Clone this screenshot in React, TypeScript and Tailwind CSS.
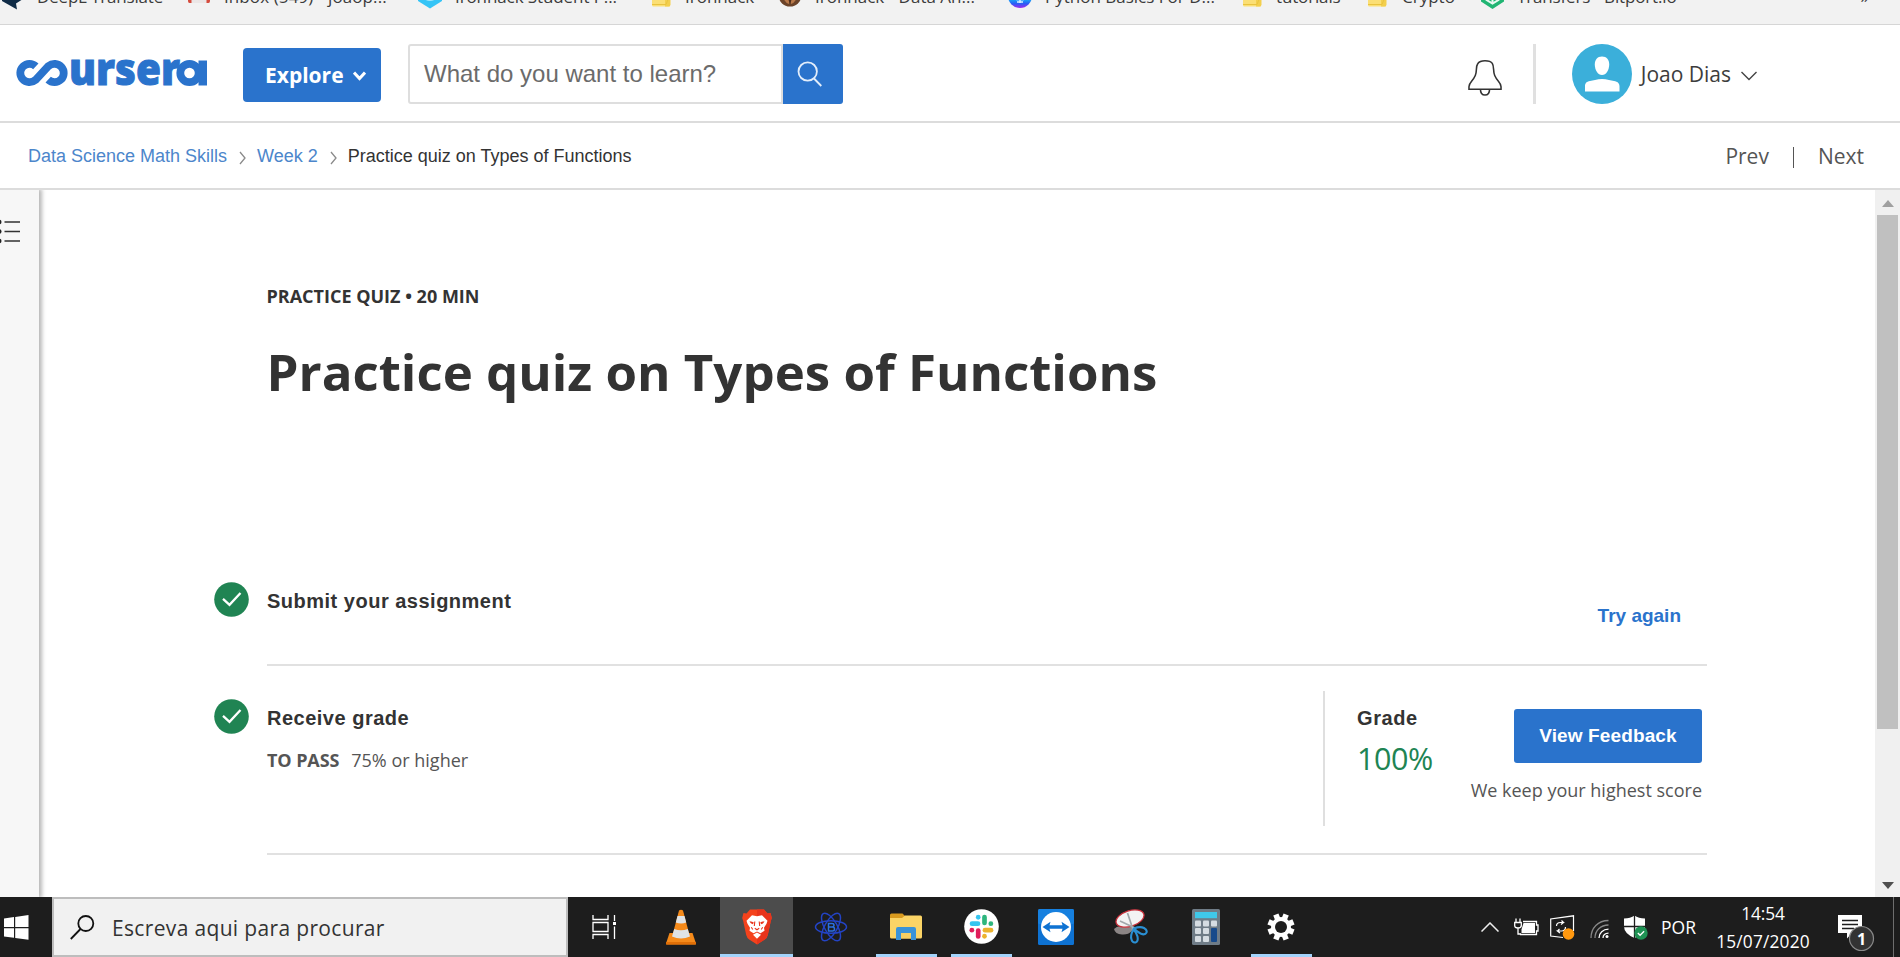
import type { ReactNode } from "react";

const OPEN = "font-['Open_Sans',sans-serif]";
const ARIAL = "font-['Liberation_Sans',Arial,sans-serif]";

function FolderMark() {
  return (
    <svg width="19" height="24" viewBox="0 0 19 24">
      <path d="M0 2h18v20.500H1.500Q0 22.500 0 21z" fill="#fbdf75" />
      <path d="M13 15h5.500v5.500q0 2-2 2H13z" fill="#f3cf4d" />
      <path d="M0 20.500h14l2-5" fill="none" stroke="#e9c33f" strokeWidth="1" />
    </svg>
  );
}

const bookmarks: { icon: ReactNode; label: string; slot: string; mark: string; tracking?: string }[] = [
  {
    label: "DeepL Translate",
    slot: "w-[188px]",
    mark: "w-[37px]",
    tracking: "tracking-[-0.18px]",
    icon: (
      <svg width="23" height="26" viewBox="0 0 23 26">
        <path d="M2 2h21v13l-7 4.500 1 6L2 17z" fill="#0f2b46" />
        <path d="M8 13l5-2" stroke="#dfe8f0" strokeWidth="2" />
      </svg>
    ),
  },
  {
    label: "Inbox (549) - joaop...",
    slot: "w-[230px]",
    mark: "w-[36px]",
    tracking: "tracking-[0.1px]",
    icon: (
      <svg width="22" height="20" viewBox="0 0 22 20">
        <path d="M3 2h16v17H3z" fill="#ebe6e6" />
        <path d="M3 8l8 7 8-7" fill="none" stroke="#d9c3c1" strokeWidth="2" />
        <path d="M0 2h3.500v17H1.500Q0 19 0 17zM18.500 2H22v15q0 2-1.500 2h-2z" fill="#d54b3d" />
      </svg>
    ),
  },
  {
    label: "Ironhack Student P...",
    slot: "w-[234px]",
    mark: "w-[37px]",
    tracking: "tracking-[-0.1px]",
    icon: (
      <svg width="24" height="25" viewBox="0 0 24 25">
        <path d="M0 2h24v15l-12 7.500L0 17z" fill="#35c4f6" />
        <path d="M7 14.500q5 3 10 0" fill="none" stroke="#a4e6fb" strokeWidth="2" />
      </svg>
    ),
  },
  { label: "Ironhack", slot: "w-[126px]", mark: "w-[33px]", icon: <FolderMark /> },
  {
    label: "Ironhack - Data An...",
    slot: "w-[230px]",
    mark: "w-[37px]",
    icon: (
      <svg width="24" height="24" viewBox="0 0 24 24">
        <circle cx="12" cy="11" r="11.500" fill="#6b4329" />
        <path d="M4 8q1 10 7 12V8zM20 8q-1 10-7 12V8z" fill="#b9794a" />
        <path d="M9 9q1 7 3 10 2-3 3-10" fill="#4a2c1b" />
      </svg>
    ),
  },
  {
    label: "Python Basics For D...",
    slot: "w-[235px]",
    mark: "w-[37px]",
    icon: (
      <svg width="24" height="25" viewBox="0 0 24 25">
        <defs>
          <linearGradient id="round" x1="0" x2="0" y1="0" y2="1">
            <stop offset="0.6" stopColor="#12b9fa" />
            <stop offset="0.82" stopColor="#2a5cf5" />
            <stop offset="1" stopColor="#a02af0" />
          </linearGradient>
        </defs>
        <circle cx="12" cy="12" r="12" fill="url(#round)" />
        <path d="M8 15.500h8M9 18h6M12 15v4" stroke="#d8f0ff" strokeWidth="1.500" />
      </svg>
    ),
  },
  { label: "tutorials", slot: "w-[125px]", mark: "w-[33px]", tracking: "tracking-[-0.15px]", icon: <FolderMark /> },
  { label: "Crypto", slot: "w-[113px]", mark: "w-[34px]", icon: <FolderMark /> },
  {
    label: "Transfers - Bitport.io",
    slot: "w-[240px]",
    mark: "w-[36px]",
    tracking: "tracking-[-0.15px]",
    icon: (
      <svg width="23" height="25" viewBox="0 0 23 25">
        <path d="M0 2h23v15.500L11.500 25 0 17.500z" fill="#21b573" />
        <path d="M5.500 13v3l6 3.500 6-3.500v-3M11.500 10v9" fill="none" stroke="#e8faf1" strokeWidth="2" />
      </svg>
    ),
  },
];

function BookmarksBar() {
  return (
    <div className={`flex h-[25px] shrink-0 overflow-hidden border-b border-[#d6d6d6] bg-[#f2f2f2] text-[17px] text-[#3c3c3c] ${OPEN}`}>
      <div className="-mt-[15px] flex h-6 grow items-start leading-6">
        {bookmarks.map((b) => (
          <div key={b.label} className={`flex shrink-0 whitespace-nowrap ${b.slot}`}>
            <span className={`-mt-px shrink-0 ${b.mark}`}>{b.icon}</span>
            <span className={b.tracking}>{b.label}</span>
          </div>
        ))}
        <span className="ml-auto pr-[31px]">»</span>
      </div>
    </div>
  );
}

function Logo() {
  return (
    <svg className="ml-4 -mt-0.5 shrink-0" width="192" height="32" viewBox="0 0 192 32">
      <g fill="none" stroke="#2a73cc" strokeWidth="7.800">
        <path d="M19.800 9.300A9.200 9.200 0 1 0 19.400 23.050L32.600 8.950A9.200 9.200 0 1 1 32.200 22.700" />
        <circle cx="173.500" cy="16" r="9.200" />
      </g>
      <path d="M182.500 3.500h8.500v25h-8.500z" fill="#2a73cc" />
      <text
        x="53"
        y="28.200"
        textLength="111"
        lengthAdjust="spacingAndGlyphs"
        fill="#2a73cc"
        stroke="#2a73cc"
        strokeWidth="1"
        fontSize="43.500"
        fontWeight="800"
        className={OPEN}
      >
        urser
      </text>
    </svg>
  );
}

function Header() {
  return (
    <header className="flex h-[98px] shrink-0 items-center border-b-2 border-[#dcdcdc] bg-white pt-[2px]">
      <Logo />
      <button className={`ml-[35px] mt-0.5 flex h-[54px] w-[138px] items-center rounded bg-[#2a73cc] pl-[22px] text-[21px] font-bold text-white ${OPEN}`}>
        <span className="mt-px">Explore</span>
        <svg className="ml-[9px] mt-0.5" width="13" height="10" viewBox="0 0 13 10" fill="none" stroke="#fff" strokeWidth="3">
          <path d="M1 1.500l5.500 6 5.500-6" />
        </svg>
      </button>
      <div className="ml-[27px] flex h-[60px] w-[435px]">
        <div className={`flex w-[375px] items-center rounded-l-[3px] border-2 border-[#dedede] pl-[14px] text-2xl text-[#6b6b6b] ${ARIAL}`}>
          What do you want to learn?
        </div>
        <button className="flex w-[60px] items-center rounded-r-[3px] bg-[#2a73cc] pl-[14px]">
          <svg width="26" height="26" viewBox="0 0 26 26" fill="none" stroke="#e3eefb" strokeWidth="1.800">
            <circle cx="10.700" cy="10.500" r="9.200" />
            <path d="M17 17.500l7.300 7.500" />
          </svg>
        </button>
      </div>
      <svg className="ml-auto mt-[8px]" width="34" height="36" viewBox="0.500 1 35 37" fill="none" stroke="#333" strokeWidth="1.600">
        <path d="M1.500 31h33v-2.500c0-4.500-4-5.500-6.500-11.500-2-5-.3-9-2.500-12.500C24 2.200 21 1.800 18 1.800s-6 .7-7.500 3C8.300 8 10 12 8 17c-2.500 6-6.500 7-6.500 11.500z" />
        <path d="M13.300 31c0 4 1.700 6 4.700 6s4.700-2 4.700-6" />
      </svg>
      <div className="ml-[31px] h-[60px] w-[3px] bg-[#e0e0e0]" />
      <svg className="ml-[36px]" width="60" height="60" viewBox="0 0 60 60">
        <circle cx="30" cy="30" r="30" fill="#3bafda" />
        <path d="M30 12.500c4.800 0 7.200 3.500 7.200 8 0 5.500-3 10.500-7.200 10.500s-7.200-5-7.200-10.500c0-4.500 2.400-8 7.200-8z" fill="#fff" />
        <path d="M13 47.500v-5c0-3.500 1.500-4.800 5-5.500l5-1c4.500-1.300 9.500-1.300 14 0l5 1c3.500.7 5.500 2 5.500 5.500v5z" fill="#fff" />
      </svg>
      <span className={`ml-[9px] mt-0.5 text-[21px] text-[#3d3d3d] ${OPEN}`}>Joao Dias</span>
      <svg className="ml-[10px] mr-[143px] mt-[3px]" width="16" height="10" viewBox="0 0 16 10" fill="none" stroke="#444" strokeWidth="1.400">
        <path d="M.5 1l7.500 7.500L15.500 1" />
      </svg>
    </header>
  );
}

function Crumb() {
  return (
    <svg className="mt-1" width="7" height="14" viewBox="0 0 7 14" fill="none" stroke="#8a8a8a" strokeWidth="1.300">
      <path d="M1 1l5 6-5 6" />
    </svg>
  );
}

function Breadcrumbs() {
  return (
    <nav className={`flex h-[67px] shrink-0 items-center border-b-2 border-[#dcdcdc] bg-white pl-[28px] pr-[36px] text-lg ${ARIAL}`}>
      <span className="text-[#4c86cb]">Data Science Math Skills</span>
      <span className="ml-3 mr-[11px]"><Crumb /></span>
      <span className="text-[#4c86cb]">Week 2</span>
      <span className="ml-3 mr-[11px]"><Crumb /></span>
      <span className="text-[#333]">Practice quiz on Types of Functions</span>
      <div className={`ml-auto flex items-center pt-0.5 text-[21px] text-[#555] ${OPEN}`}>
        <span>Prev</span>
        <span className="ml-[24px] mr-[24px] mt-0.5 h-[21px] w-px bg-[#555]" />
        <span>Next</span>
      </div>
    </nav>
  );
}

function Check() {
  return (
    <svg className="ml-[0.5px] mt-[17px]" width="35" height="35" viewBox="0 0 35 35">
      <circle cx="17.500" cy="17.500" r="17.300" fill="#208453" />
      <path d="M9 16.800l6.500 6L26.500 11" fill="none" stroke="#fff" strokeWidth="2.300" />
    </svg>
  );
}

function Content() {
  return (
    <main className="flex h-full grow flex-col pl-[174px]">
      <p className={`ml-[53.5px] mt-[94px] h-6 text-lg leading-6 font-bold text-[#333] ${OPEN}`}>PRACTICE QUIZ • 20 MIN</p>
      <h1 className={`ml-[53.5px] mt-[31px] h-16 text-[51px] leading-[64px] font-bold text-[#333] ${OPEN}`}>Practice quiz on Types of Functions</h1>

      <section className="mt-[162px] flex h-[101px]">
        <div className="w-[54px] shrink-0"><Check /></div>
        <div className={`flex w-[1440px] justify-between border-b-2 border-[#e1e1e1] pr-[26px] ${ARIAL}`}>
          <h2 className="mt-[24px] h-6 text-xl leading-6 font-bold tracking-[0.5px] text-[#333]">Submit your assignment</h2>
          <button className="mt-[39px] h-6 text-[19px] leading-6 font-bold text-[#2a73cc]">Try again</button>
        </div>
      </section>

      <section className="flex h-[189px]">
        <div className="w-[54px] shrink-0 pt-[16px]"><Check /></div>
        <div className="flex w-[1440px] border-b-2 border-[#e1e1e1]">
          <div>
            <h2 className={`mt-[40px] h-6 text-xl leading-6 font-bold tracking-[0.5px] text-[#333] ${ARIAL}`}>Receive grade</h2>
            <p className={`mt-[18px] flex h-6 gap-3 text-lg leading-6 text-[#555] ${OPEN}`}>
              <b className="tracking-[-0.1px]">TO PASS</b>
              <span>75% or higher</span>
            </p>
          </div>
          <div className="ml-auto mt-[25px] flex h-[135px] w-[384px] border-l-2 border-[#dfdfdf] pl-[32px]">
            <div>
              <h2 className={`mt-[15px] h-6 text-xl leading-6 font-bold tracking-[0.6px] text-[#333] ${ARIAL}`}>Grade</h2>
              <p className={`mt-[8px] h-10 text-[30.5px] leading-10 tracking-[-0.4px] text-[#208453] ${OPEN}`}>100%</p>
            </div>
            <div className="ml-auto flex flex-col items-end pr-[5px] pt-[18px]">
              <button className={`h-[54px] w-[188px] rounded-[3px] bg-[#2a73cc] text-[19px] font-bold tracking-[0.12px] text-white ${ARIAL}`}>View Feedback</button>
              <p className={`mt-[15px] h-6 text-[18px] leading-6 text-[#555] ${OPEN}`}>We keep your highest score</p>
            </div>
          </div>
        </div>
      </section>
    </main>
  );
}

function Scrollbar() {
  return (
    <div className="flex w-[25px] shrink-0 flex-col items-center bg-[#f0f0f0]">
      <svg className="mt-[10px]" width="12" height="7" viewBox="0 0 12 7"><path d="M6 0l6 7H0z" fill="#a0a0a0" /></svg>
      <div className="mt-[8px] h-[514px] w-[21px] bg-[#c0c0c0]" />
      <svg className="mb-[8px] mt-auto" width="12" height="7" viewBox="0 0 12 7"><path d="M0 0h12L6 7z" fill="#4f4f4f" /></svg>
    </div>
  );
}

function Vlc() {
  return (
    <svg width="30" height="36" viewBox="0 0 30 36">
      <path d="M3.500 24h23L30 34.500q0 1-1 1H1q-1 0-1-1z" fill="#f58a1a" />
      <path d="M0 33h30v2.500H0z" fill="#e06f07" />
      <path d="M13 1.500q2-1.500 4 0L24 28q-9 4-18 0z" fill="#f58a1a" />
      <path d="M11.500 7h7l1.700 6.500q-5 2-10.400 0zM8.200 20q6.800 2.500 13.600 0L24 27.500q-9 4-18 0z" fill="#dfe3e6" />
    </svg>
  );
}

function Brave() {
  return (
    <svg width="30" height="36" viewBox="0 0 30 36">
      <path d="M8 .5h14l3.500 4 3-.5 1.300 5-1 3-3 14q-.7 3-3 4.600L15 35.500 7.200 30.600Q5 29 4.200 26l-3-14-1-3L1.500 4l3 .5z" fill="#f4421c" />
      <path d="M15 .5h7l3.500 4 3-.5 1.300 5-1 3-3 14q-.7 3-3 4.600L15 35.500z" fill="#e8341c" />
      <path d="M15 7.200l5-1 5.500 5.500-1 3-2.500 4 .5 3-4 2.500L15 22.500l-3.500 1.700-4-2.500.5-3-2.500-4-1-3 5.500-5.500z" fill="#fff" />
      <path d="M11 25.700l4-2.200 4 2.200-4 4z" fill="#fff" />
      <path d="M7.500 12.300q3 .2 4.500 1.500l-1.500 1.500q-2-.4-3-3zM22.500 12.300q-3 .2-4.500 1.500l1.500 1.500q2-.4 3-3z" fill="#e8341c" />
      <path d="M12.800 12.500l-.5 4.500M17.200 12.500l.5 4.500M12.800 19.300l2.200 1.500 2.200-1.500M9.300 18.300l1.500 2.200M20.700 18.300l-1.500 2.200" fill="none" stroke="#e8341c" strokeWidth="1.100" />
    </svg>
  );
}

function Atom() {
  return (
    <svg width="34" height="32" viewBox="0 0 34 32" fill="none" stroke="#2343c4" strokeWidth="1.500">
      <ellipse cx="17" cy="16" rx="15.500" ry="6.300" />
      <ellipse cx="17" cy="16" rx="15.500" ry="6.300" transform="rotate(60 17 16)" />
      <ellipse cx="17" cy="16" rx="15.500" ry="6.300" transform="rotate(120 17 16)" />
      <path d="M14.500 12v8M14 12.500h4q2 0 2 1.700t-2 1.800h-3 3.500q2 0 2 2t-2 2H14" stroke="#2a6fe0" />
    </svg>
  );
}

function Explorer() {
  return (
    <svg width="32" height="28" viewBox="0 0 32 28">
      <path d="M0 2q0-1.500 1.500-1.500h11L15 3v5H0z" fill="#d99a1e" />
      <path d="M0 5h12l3-2.500h15.500Q32 2.500 32 4v20q0 1.500-1.500 1.500h-29Q0 25.500 0 24z" fill="#fbd466" />
      <path d="M6 16q0-2 2-2h16q2 0 2 2v11h-5v-6H11v6H6z" fill="#3a93d8" />
      <path d="M11 20h10v5.500H11z" fill="#f6cf63" />
    </svg>
  );
}

function Slack() {
  return (
    <svg width="35" height="35" viewBox="0 0 35 35">
      <circle cx="17.500" cy="17.500" r="17.300" fill="#fff" />
      <g strokeWidth="4.700" strokeLinecap="round" fill="none">
        <path d="M8 14.700h6" stroke="#36c5f0" /><path d="M14.200 8.200v.1" stroke="#36c5f0" />
        <path d="M20.500 8v6" stroke="#2eb67d" /><path d="M26.800 14.700h.1" stroke="#2eb67d" />
        <path d="M21 21.200h6" stroke="#ecb22e" /><path d="M20.500 27.200v.1" stroke="#ecb22e" />
        <path d="M14.200 21.500v6" stroke="#e01e5a" /><path d="M7.800 21.200h.1" stroke="#e01e5a" />
      </g>
    </svg>
  );
}

function TeamViewer() {
  return (
    <svg width="36" height="36" viewBox="0 0 36 36">
      <rect width="36" height="36" rx="1.500" fill="#0e72d2" />
      <rect width="36" height="15" rx="1.500" fill="#1a86e4" opacity="0.7" />
      <circle cx="18" cy="18" r="15" fill="#fff" />
      <path d="M4.500 18l8-5.300-1 3.500h13l-1-3.500 8 5.300-8 5.300 1-3.500h-13l1 3.500z" fill="#0e72d2" />
    </svg>
  );
}

function Snip() {
  return (
    <svg width="34" height="36" viewBox="0 0 34 36">
      <path d="M0 20q4-4 9-2l9-1v5q-4 4-10 3.500Q1 25 0 20z" fill="#8b8585" />
      <ellipse cx="16" cy="9.500" rx="14.500" ry="7.800" transform="rotate(-18 16 9.500)" fill="#f3f3f3" stroke="#c9303b" strokeWidth="1.300" />
      <path d="M13.500 4l5 15M6 12l15 7" stroke="#a2a7ab" strokeWidth="1.700" />
      <path d="M18 19l3 1" stroke="#b9bec2" strokeWidth="3" />
      <g fill="none" stroke="#2a8fd3" strokeWidth="2.100">
        <path d="M19.500 20.500q-3.500 6-2 10 1 3.500 4 3 3-1 2-6-1-4-4-7z" />
        <path d="M20 19.500q6-2.500 10-.5 3.500 2 2.500 4.500-1.500 3-6 1-4-2-6.500-5z" />
      </g>
    </svg>
  );
}

const calcKeys = [
  [3, 11.5], [11, 11.5], [19, 11.5],
  [3, 19], [11, 19],
  [3, 27], [11, 27],
];

function Calculator() {
  return (
    <svg width="28" height="36" viewBox="0 0 28 36">
      <rect width="28" height="36" rx="1.500" fill="#6f7c87" />
      <rect x="3" y="3" width="22" height="6.200" fill="#3fc8ea" />
      {calcKeys.map(([x, y]) => (
        <rect key={`${x}-${y}`} x={x} y={y} width="6" height="6" rx="1" fill="#d5dce2" />
      ))}
      <rect x="19" y="19" width="6" height="14" rx="1" fill="#174a8b" />
    </svg>
  );
}

function Gear() {
  return (
    <svg width="28" height="28" viewBox="0 0 28 28">
      {[22.5, 67.5, 112.5, 157.5].map((a) => (
        <rect key={a} x="11.200" y="0.500" width="5.600" height="27" fill="#fff" transform={`rotate(${a} 14 14)`} />
      ))}
      <circle cx="14" cy="14" r="10" fill="#fff" />
      <circle cx="14" cy="14" r="6" fill="#1d1d1d" />
    </svg>
  );
}

const apps: { icon: ReactNode; id: string; cell: string; bar: string }[] = [
  { id: "vlc", icon: <Vlc />, cell: "w-[78px]", bar: "w-0" },
  { id: "brave", icon: <Brave />, cell: "w-[73px] bg-[#4c4c4c]", bar: "w-full" },
  { id: "atom", icon: <Atom />, cell: "w-[76px]", bar: "w-0" },
  { id: "files", icon: <Explorer />, cell: "w-[74px]", bar: "w-[61px]" },
  { id: "slack", icon: <Slack />, cell: "w-[76px]", bar: "w-[61px]" },
  { id: "remote", icon: <TeamViewer />, cell: "w-[74px]", bar: "w-0" },
  { id: "snip", icon: <Snip />, cell: "w-[76px]", bar: "w-0" },
  { id: "calc", icon: <Calculator />, cell: "w-[74px]", bar: "w-0" },
  { id: "settings", icon: <Gear />, cell: "w-[76px]", bar: "w-[61px]" },
];

function Tray() {
  return (
    <div className={`ml-auto flex h-[60px] items-center text-white ${OPEN}`}>
      <svg width="18" height="10" viewBox="0 0 18 10" fill="none" stroke="#eee" strokeWidth="1.500"><path d="M.5 9.500L9 1l8.500 8.500" /></svg>
      <svg className="ml-[15px]" width="25" height="18" viewBox="0 0 25 18" fill="none" stroke="#fff" strokeWidth="1.300">
        <path d="M2 .5v4M6 .5v4M.7 4.500h6.600v3q0 2.500-3.300 2.500T.7 7.500zM4 10v6h3" />
        <path d="M9.500 5H21v10H7.500v-3.500z" fill="#fff" stroke="none" />
        <path d="M9 3.500h13.500V7H24v6h-1.500v3.500H6" />
      </svg>
      <svg className="ml-[11px]" width="25" height="25" viewBox="0 0 25 25" fill="none" stroke="#fff" strokeWidth="1.200">
        <path d="M13 22.500L.7 21V4L23.500.8V16" />
        <path d="M6.500 11q0-3.500 4-3.500h3l-2-2M15.500 12q0 4-4 4h-4l2.500 2M13.500 7.500l-2.500 2M7.500 16l2-2" />
        <circle cx="18.500" cy="19" r="5.800" fill="#ff980f" stroke="none" />
      </svg>
      <svg className="ml-[15px] mt-1" width="20" height="20" viewBox="0 0 20 20" fill="none" strokeWidth="1.300">
        <path d="M1 19C1 9 8 1.500 18.500 1.500" stroke="#888" />
        <path d="M5 19C5 11.500 10.500 6 18.500 6" stroke="#888" />
        <path d="M9 19c0-5 4-8.800 9.500-8.800M13 19c0-2.800 2-4.800 5.500-4.800" stroke="#fff" />
        <circle cx="17" cy="17.500" r="1.500" fill="#fff" />
      </svg>
      <svg className="ml-[13px]" width="25" height="25" viewBox="0 0 25 25">
        <path d="M11.500.5q4 3 10.500 3v8q0 7-10.500 11.500Q1 18.500 1 11.500v-8q6.500 0 10.500-3z" fill="#fff" />
        <path d="M11.500 0v23M1 11.500h21" stroke="#1d1d1d" strokeWidth="1.300" />
        <circle cx="18" cy="18" r="6.700" fill="#1f9254" />
        <path d="M14.800 18l2.300 2.300 4-4" fill="none" stroke="#fff" strokeWidth="1.300" />
      </svg>
      <span className="ml-[13px] w-[36px] text-[17.5px]">POR</span>
      <div className="ml-[18px] flex w-[96px] flex-col items-center pt-px text-[17.3px]">
        <span className="h-[28px] leading-[28px] tracking-[-0.1px]">14:54</span>
        <span className="h-[28px] leading-[28px] tracking-[0.2px]">15/07/2020</span>
      </div>
      <svg className="ml-[26px] mt-3" width="38" height="38" viewBox="0 0 38 38">
        <path d="M1 1h24v18H15l-5 5.500V19H1z" fill="#fff" />
        <path d="M5 6.500h16M5 10.500h16M5 14.500h12" stroke="#1d1d1d" strokeWidth="1.300" />
        <circle cx="24.500" cy="24.500" r="12" fill="#333" stroke="#8a8a8a" strokeWidth="1.200" />
        <text x="24.500" y="30.500" fill="#fff" fontSize="16" fontWeight="700" textAnchor="middle">1</text>
      </svg>
      <div className="ml-[18px] mr-[6px] h-full w-px bg-[#6e6e6e]" />
    </div>
  );
}

function Taskbar() {
  return (
    <footer className="flex h-[60px] shrink-0 items-center bg-[#1d1d1d]">
      <div className="w-[52px] shrink-0 pl-1">
        <svg width="25" height="25" viewBox="0 0 25 25" fill="#fff">
          <path d="M0 3.500l10-1.400V12H0zM11.200 1.900L24.500 0v12H11.200zM0 13.200h10v9.500L0 21.400zM11.200 13.200h13.300v11.600l-13.300-1.900z" />
        </svg>
      </div>
      <div className={`flex h-[60px] w-[516px] shrink-0 items-center border-2 border-[#bdbdbd] bg-[#f1f1f1] pl-[16px] text-[21px] text-[#333] ${OPEN}`}>
        <svg width="25" height="25" viewBox="0 0 25 25" fill="none" stroke="#111" strokeWidth="1.800">
          <circle cx="15.800" cy="8.500" r="7.500" />
          <path d="M10.500 14L.8 24" />
        </svg>
        <span className="ml-[17px] pt-1 tracking-[0.34px]">Escreva aqui para procurar</span>
      </div>
      <svg className="ml-[24px] mr-[26px] shrink-0" width="24" height="24" viewBox="0 0 24 24" fill="none" stroke="#fff" strokeWidth="1.300">
        <path d="M1 0v4.500h15V0M1 24v-4.500h15V24M1 7.500h15v9H1z" />
        <path d="M22.500 0v6M22.500 11.500V24" />
        <path d="M21 7h3v3h-3z" fill="#fff" stroke="none" />
      </svg>
      {apps.map((a) => (
        <div key={a.id} className={`flex h-[60px] shrink-0 flex-col items-center ${a.cell}`}>
          <div className="flex h-[57px] items-center pt-0.5">{a.icon}</div>
          <div className={`h-[3px] bg-[#a3d3fb] ${a.bar}`} />
        </div>
      ))}
      <Tray />
    </footer>
  );
}

export default function App() {
  return (
    <div className="flex h-[957px] w-[1900px] flex-col overflow-hidden bg-white">
      <BookmarksBar />
      <Header />
      <Breadcrumbs />
      <div className="flex h-[707px] shrink-0 overflow-hidden">
        <aside className="w-[39px] shrink-0 bg-[#f7f7f7] pt-[28px] shadow-[2px_0_4px_1px_rgba(0,0,0,0.28)]">
          <svg width="21" height="26" viewBox="0 0 21 26" stroke="#333" strokeWidth="1.700">
            <path d="M4.500 4H20M4.500 13.500H20M4.500 23H20" />
            <g fill="#222" stroke="none">
              <circle cx="-1" cy="4" r="2.500" /><circle cx="-1" cy="13.500" r="2.500" /><circle cx="-1" cy="23" r="2.500" />
            </g>
          </svg>
        </aside>
        <Content />
        <Scrollbar />
      </div>
      <Taskbar />
    </div>
  );
}
